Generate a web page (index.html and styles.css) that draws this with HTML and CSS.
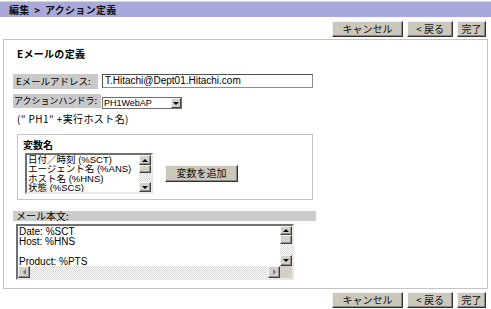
FILE: index.html
```html
<!DOCTYPE html>
<html lang="ja">
<head>
<meta charset="utf-8">
<title>アクション定義</title>
<link rel="stylesheet" href="styles.css">
</head>
<body>
<div class="hdr">編集 &gt; アクション定義</div>
<div class="btns">
  <div class="btn w71">キャンセル</div>
  <div class="btn w46">&lt; 戻る</div>
  <div class="btn w29">完了</div>
</div>
<div class="panel">
  <div class="title">Eメールの定義</div>
  <div class="row r-mail">
    <div class="lbl l-mail">Eメールアドレス:</div>
    <div class="inp">T.Hitachi@Dept01.Hitachi.com</div>
  </div>
  <div class="row r-hand">
    <div class="lbl l-hand">アクションハンドラ:</div>
    <div class="sel"><span class="seltxt">PH1WebAP</span><span class="selbtn"><i class="tri-dn"></i></span></div>
  </div>
  <div class="note">(″ PH1″ +実行ホスト名)</div>
  <div class="varbox">
    <div class="vtitle">変数名</div>
    <div class="vrow">
      <div class="list">
        <div class="items">
          <div class="it">日付／時刻 (%SCT)</div>
          <div class="it">エージェント名 (%ANS)</div>
          <div class="it">ホスト名 (%HNS)</div>
          <div class="it">状態 (%SCS)</div>
        </div>
        <div class="vsb">
          <div class="sbtn h10"><i class="tri-up"></i></div>
          <div class="sbtn thumb8"></div>
          <div class="track"></div>
          <div class="sbtn h10"><i class="tri-dn"></i></div>
        </div>
      </div>
      <div class="btn addbtn">変数を追加</div>
    </div>
  </div>
  <div class="mlbl">メール本文:</div>
  <div class="ta">
    <div class="tatext">
      <div>Date: %SCT</div>
      <div>Host: %HNS</div>
      <div>&nbsp;</div>
      <div>Product: %PTS</div>
    </div>
    <div class="vsb">
      <div class="sbtn h9"><i class="tri-up"></i></div>
      <div class="sbtn thumb9"></div>
      <div class="track"></div>
      <div class="sbtn h11"><i class="tri-dn"></i></div>
    </div>
    <div class="hsb">
      <div class="sbtn w12"><i class="tri-lt"></i></div>
      <div class="track"></div>
      <div class="sbtn w12"><i class="tri-rt"></i></div>
    </div>
    <div class="corner"></div>
  </div>
</div>
<div class="btns bottom">
  <div class="btn w71">キャンセル</div>
  <div class="btn w46">&lt; 戻る</div>
  <div class="btn w29">完了</div>
</div>
</body>
</html>
```
FILE: styles.css
```css
* { box-sizing: border-box; }
body {
  margin: 0;
  width: 491px;
  height: 309px;
  overflow: hidden;
  background: #fff;
  color: #000;
  font-family: "Liberation Sans", "Noto Sans CJK JP", sans-serif;
  font-size: 10px;
}
.hdr {
  margin-top: 1px;
  height: 16px;
  background: #a9a9d9;
  border-top: 1px solid #d4d4e4;
  padding-left: 9px;
  font-family: "Noto Sans CJK JP", sans-serif;
  font-weight: bold;
  font-size: 10px;
  line-height: 15px;
  word-spacing: 2px;
  letter-spacing: 0.3px;
  color: #111;
}
.btns {
  display: flex;
  justify-content: flex-end;
  gap: 4px;
  padding-right: 5px;
  margin-top: 4px;
  height: 16px;
}
.btns.bottom { margin-top: 3px; }
.btn {
  height: 16px;
  background: #cbc7bb;
  border: 1px solid;
  border-color: #f4f4f0 #303030 #303030 #f4f4f0;
  box-shadow: inset -1px -1px 0 #8a8a8a;
  font-family: "Noto Sans CJK JP", sans-serif;
  font-size: 10px;
  line-height: 13px;
  text-align: center;
  color: #111;
}
.w71 { width: 71px; }
.w46 { width: 46px; }
.w29 { width: 29px; }
.panel {
  margin: 2px 3px 0 3px;
  height: 250px;
  border: 1px solid #c4c4c4;
  padding: 8px 0 0 9px;
}
.title {
  padding-left: 4px;
  height: 11px;
  line-height: 11px;
  font-family: "Noto Sans CJK JP", sans-serif;
  font-weight: bold;
  font-size: 10px;
  letter-spacing: 0.3px;
}
.row { display: flex; }
.r-mail { margin-top: 15px; height: 15px; align-items: flex-start; }
.r-hand { margin-top: 5px; height: 15px; align-items: flex-end; }
.lbl {
  background: #c9c9c9;
  padding-left: 3px;
  font-family: "Noto Sans CJK JP", sans-serif;
  white-space: nowrap;
  overflow: hidden;
}
.l-mail { width: 85px; height: 15px; line-height: 15px; font-size: 9.5px; }
.l-hand { width: 88px; height: 14px; line-height: 14px; font-size: 9px; padding-left: 1px; align-self: flex-start; }
.inp {
  margin-left: 4px;
  width: 211px;
  height: 14px;
  border: 1px solid #8a8a8a;
  border-top-color: #505050;
  border-left-color: #505050;
  padding-left: 2px;
  line-height: 12px;
  font-size: 10px;
}
.sel {
  margin-left: 1px;
  width: 80px;
  height: 12px;
  border: 1px solid #707070;
  display: flex;
  justify-content: space-between;
  align-items: center;
}
.seltxt { font-size: 9px; line-height: 10px; padding-left: 1px; }
.selbtn {
  width: 10px;
  height: 10px;
  background: #d4d0c8;
  border: 1px solid;
  border-color: #f0f0f0 #404040 #404040 #f0f0f0;
  display: flex;
  align-items: center;
  justify-content: center;
}
.note {
  margin-top: 4px;
  padding-left: 4px;
  height: 11px;
  line-height: 11px;
  font-family: "Noto Sans CJK JP", sans-serif;
  font-size: 10px;
  letter-spacing: 0.4px;
}
.varbox {
  margin-top: 10px;
  margin-left: 4px;
  width: 296px;
  height: 66px;
  border: 1px solid #c4c4c4;
  padding: 4px 0 0 5px;
}
.vtitle {
  height: 11px;
  line-height: 11px;
  font-family: "Noto Sans CJK JP", sans-serif;
  font-weight: bold;
  font-size: 10px;
}
.vrow {
  display: flex;
  align-items: center;
  margin-top: 3px;
  margin-left: 2px;
}
.list {
  width: 128px;
  height: 41px;
  border: 2px solid;
  border-color: #707070 #e8e8e8 #e8e8e8 #707070;
  display: flex;
  background: #fff;
}
.items { flex: 1; padding-left: 1px; font-size: 9.5px; white-space: nowrap; overflow: hidden; }
.it { height: 9.25px; line-height: 9.25px; }
.vsb {
  width: 12px;
  display: flex;
  flex-direction: column;
}
.track {
  flex: 1;
  background: repeating-conic-gradient(#ffffff 0 25%, #d6d6d6 0 50%) 0 0 / 2px 2px;
}
.sbtn {
  background: #d4d0c8;
  border: 1px solid;
  border-color: #f4f4f4 #404040 #404040 #f4f4f4;
  box-shadow: inset -1px -1px 0 #909090;
  display: flex;
  align-items: center;
  justify-content: center;
  flex-shrink: 0;
}
.h9 { height: 9px; }
.h10 { height: 10px; }
.h11 { height: 11px; }
.thumb8 { height: 8px; }
.thumb9 { height: 9px; }
.w12 { width: 12px; }
.tri-up, .tri-dn, .tri-lt, .tri-rt { display: block; width: 0; height: 0; }
.tri-up { border-left: 3px solid transparent; border-right: 3px solid transparent; border-bottom: 3px solid #000; }
.tri-dn { border-left: 3px solid transparent; border-right: 3px solid transparent; border-top: 3px solid #000; }
.tri-lt { border-top: 3px solid transparent; border-bottom: 3px solid transparent; border-right: 3px solid #777; }
.tri-rt { border-top: 3px solid transparent; border-bottom: 3px solid transparent; border-left: 3px solid #777; }
.addbtn {
  margin-left: 12px;
  width: 73px;
  height: 17px;
  line-height: 14px;
}
.mlbl {
  margin-top: 11px;
  width: 303px;
  height: 10px;
  background: #cccccc;
  padding-left: 3px;
  line-height: 10px;
  font-family: "Noto Sans CJK JP", sans-serif;
  font-size: 10px;
}
.ta {
  margin-top: 3px;
  margin-left: 3px;
  width: 278px;
  height: 56px;
  border: 2px solid;
  border-color: #707070 #e8e8e8 #e8e8e8 #707070;
  display: grid;
  grid-template-columns: 1fr 12px;
  grid-template-rows: 1fr 12px;
}
.tatext { padding: 1px 0 0 1px; line-height: 10px; font-size: 10px; overflow: hidden; white-space: nowrap; }
.hsb { display: flex; }
.corner { background: #d4d0c8; }
```
